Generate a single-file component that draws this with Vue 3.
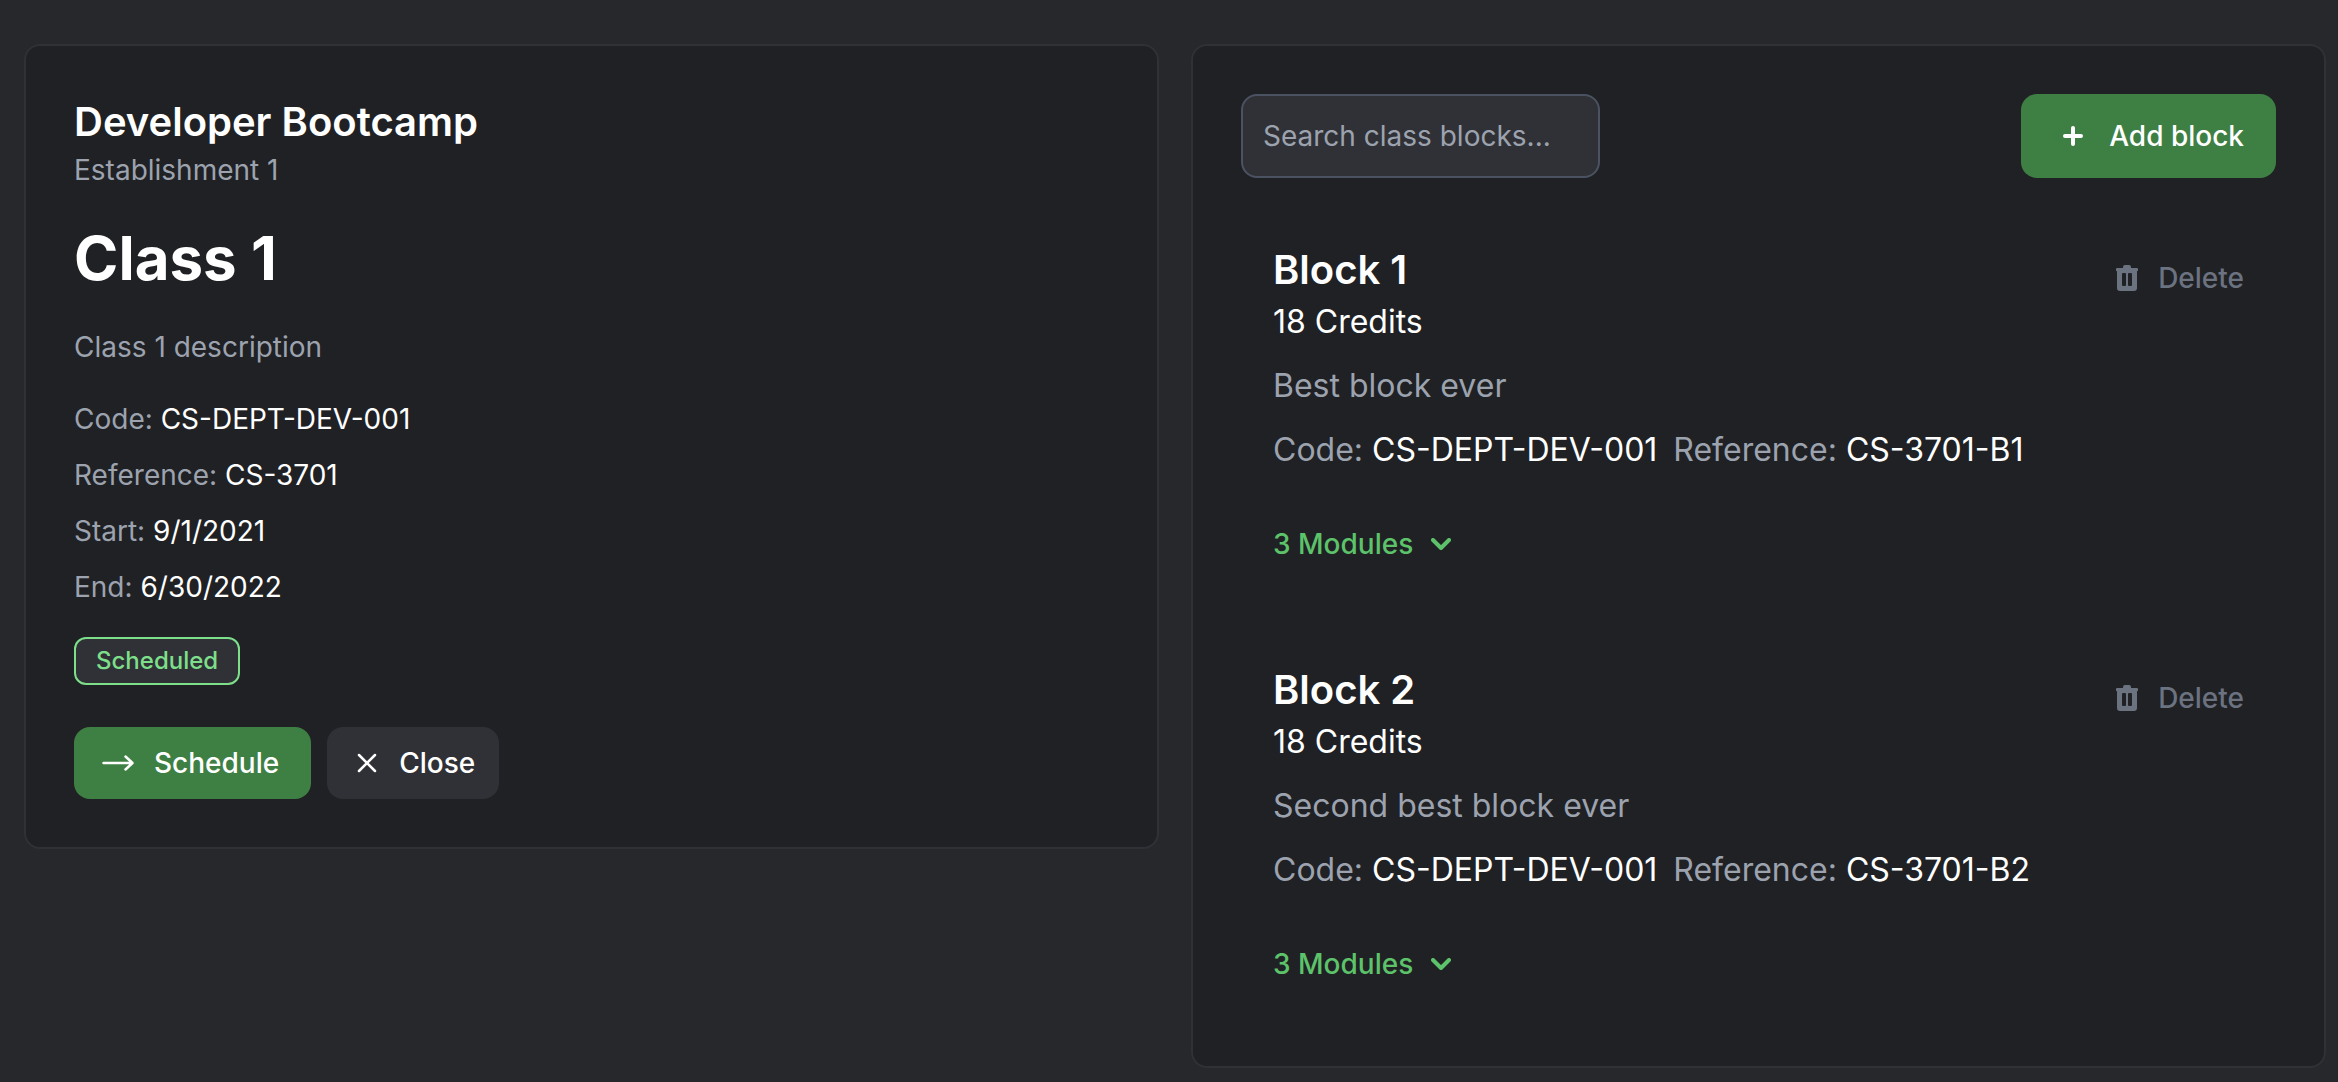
<script setup>
import { ref } from 'vue'

const search = ref('')

const details = [
  { label: 'Code:', value: 'CS-DEPT-DEV-001' },
  { label: 'Reference:', value: 'CS-3701' },
  { label: 'Start:', value: '9/1/2021' },
  { label: 'End:', value: '6/30/2022' },
]

const blocks = [
  {
    name: 'Block 1',
    credits: '18 Credits',
    description: 'Best block ever',
    code: 'CS-DEPT-DEV-001',
    reference: 'CS-3701-B1',
    modules: '3 Modules',
  },
  {
    name: 'Block 2',
    credits: '18 Credits',
    description: 'Second best block ever',
    code: 'CS-DEPT-DEV-001',
    reference: 'CS-3701-B2',
    modules: '3 Modules',
  },
]
</script>

<template>
  <main class="page">
    <section class="card">
      <h2 class="heading">Developer Bootcamp</h2>
      <p class="muted">Establishment 1</p>
      <h1 class="title">Class 1</h1>
      <p class="muted">Class 1 description</p>
      <ul class="details">
        <li v-for="item in details" :key="item.label">
          <span class="muted">{{ item.label }}</span> {{ item.value }}
        </li>
      </ul>
      <span class="badge">Scheduled</span>
      <div class="actions">
        <button type="button" class="btn primary">
          <svg class="icon" viewBox="0 0 32 32" aria-hidden="true">
            <path d="M1.5 16H30M23.5 9.5L30.5 16L23.5 22.5" fill="none" stroke="currentColor" stroke-width="2.5" stroke-linecap="round" stroke-linejoin="round" />
          </svg>
          Schedule
        </button>
        <button type="button" class="btn secondary">
          <svg class="icon" viewBox="0 0 32 32" aria-hidden="true">
            <path d="M8 8L24 24M24 8L8 24" fill="none" stroke="currentColor" stroke-width="2.5" stroke-linecap="round" />
          </svg>
          Close
        </button>
      </div>
    </section>

    <section class="card">
      <div class="toolbar">
        <input v-model="search" class="search" type="text" aria-label="Search class blocks" placeholder="Search class blocks..." />
        <button type="button" class="btn primary add">
          <svg class="icon" viewBox="0 0 32 32" aria-hidden="true">
            <path d="M16 8V24M8 16H24" fill="none" stroke="currentColor" stroke-width="4" stroke-linecap="round" />
          </svg>
          Add block
        </button>
      </div>

      <div class="blocks">
        <article v-for="block in blocks" :key="block.name" class="block">
          <div class="block-head">
            <div>
              <h2 class="heading">{{ block.name }}</h2>
              <p class="large">{{ block.credits }}</p>
            </div>
            <button type="button" class="delete">
              <svg class="trash" viewBox="0 0 22 26" aria-hidden="true">
                <path fill="currentColor" fill-rule="evenodd" d="M1 3H7V2Q7 0 9 0H13Q15 0 15 2V3H21Q22 3 22 4V6H21V23Q21 26 18 26H4Q1 26 1 23V6H0V4Q0 3 1 3ZM6 9V20Q6 21 7 21H9Q10 21 10 20V9Q10 8 9 8H7Q6 8 6 9ZM12 9V20Q12 21 13 21H15Q16 21 16 20V9Q16 8 15 8H13Q12 8 12 9Z" />
              </svg>
              Delete
            </button>
          </div>
          <p class="large muted spaced">{{ block.description }}</p>
          <p class="large meta">
            <span><span class="muted">Code:</span> {{ block.code }}</span>
            <span><span class="muted">Reference:</span> {{ block.reference }}</span>
          </p>
          <button type="button" class="modules">
            {{ block.modules }}
            <svg class="chevron" viewBox="0 0 20 12" aria-hidden="true">
              <path d="M2 2L10 10L18 2" fill="none" stroke="currentColor" stroke-width="4" stroke-linecap="round" stroke-linejoin="round" />
            </svg>
          </button>
        </article>
      </div>
    </section>
  </main>
</template>

<style>
body {
  margin: 0;
  background: #27282c;
}
</style>

<style scoped>
.page {
  display: grid;
  grid-template-columns: 1fr 1fr;
  align-items: start;
  gap: 32px;
  padding: 44px 12px 16px 24px;
  font-family: Inter, "Liberation Sans", sans-serif;
  font-size: 28px;
  line-height: 40px;
  color: #fff;
}

h1,
h2,
p,
ul {
  margin: 0;
  padding: 0;
}

button,
input {
  font: inherit;
  color: inherit;
  box-sizing: border-box;
}

button {
  border: 0;
  cursor: pointer;
}

.card {
  background: #202124;
  border: 2px solid #303136;
  border-radius: 16px;
  padding: 48px;
}

.heading {
  font-size: 40px;
  line-height: 56px;
  font-weight: 600;
}

.title {
  margin: 32px 0 33px;
  font-size: 60px;
  line-height: 72px;
  font-weight: 700;
}

.muted {
  color: #9ca3af;
}

.details {
  display: flex;
  flex-direction: column;
  gap: 16px;
  margin: 32px 0 30px;
  list-style: none;
}

.badge {
  display: block;
  width: fit-content;
  padding: 6px 20px;
  border: 2px solid #7ddf8a;
  border-radius: 12px;
  background: #303136;
  color: #7ddf8a;
  font-size: 24px;
  line-height: 32px;
  font-weight: 500;
}

.actions {
  display: flex;
  gap: 16px;
  margin-top: 42px;
}

.btn {
  display: flex;
  align-items: center;
  gap: 20px;
  height: 72px;
  padding: 0 32px 0 28px;
  border-radius: 16px;
  font-weight: 500;
}

.primary {
  background: #3e8044;
}

.secondary {
  gap: 16px;
  padding: 0 24px;
  background: #303136;
}

.icon {
  width: 32px;
  height: 32px;
}

.toolbar {
  display: flex;
  justify-content: space-between;
}

.search {
  width: 359px;
  height: 84px;
  padding: 0 20px;
  border: 2px solid #4b5262;
  border-radius: 16px;
  background: #303136;
}

.search::placeholder {
  color: #9ca3af;
  opacity: 1;
}

.add {
  height: 84px;
  padding: 0 32px 0 36px;
}

.blocks {
  display: flex;
  flex-direction: column;
  gap: 32px;
  margin-top: 32px;
}

.block {
  padding: 32px;
}

.block-head {
  display: flex;
  justify-content: space-between;
  align-items: start;
}

.large {
  font-size: 32px;
  line-height: 48px;
}

.delete {
  display: flex;
  align-items: center;
  gap: 20px;
  margin-top: 16px;
  padding: 0;
  background: none;
  color: #6b7280;
  font-weight: 500;
}

.trash {
  width: 22px;
  height: 26px;
}

.spaced {
  margin: 16px 0;
}

.meta {
  display: flex;
  gap: 16px;
}

.modules {
  display: flex;
  align-items: center;
  gap: 18px;
  height: 44px;
  margin-top: 48px;
  padding: 0;
  background: none;
  color: #5dc36a;
  font-weight: 500;
}

.chevron {
  width: 20px;
  height: 12px;
}
</style>
